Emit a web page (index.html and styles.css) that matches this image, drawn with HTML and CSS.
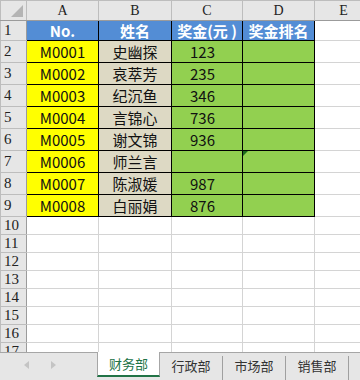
FILE: index.html
```html
<!DOCTYPE html>
<html lang="zh-CN">

<head>
    <meta charset="UTF-8">
    <meta name="viewport" content="width=device-width, initial-scale=1.0">
    <title>财务部</title>
    <link rel="stylesheet" href="styles.css">
</head>

<body>
    <div class="sheet">
        <table class="grid">
            <colgroup>
                <col class="c-rh">
                <col class="c-a">
                <col class="c-b">
                <col class="c-c">
                <col class="c-d">
                <col class="c-e">
            </colgroup>
            <tr class="r-head">
                <th class="corner"><span class="corner-tri"></span></th>
                <th>A</th>
                <th>B</th>
                <th>C</th>
                <th>D</th>
                <th>E</th>
            </tr>
            <tr class="r-title">
                <th class="rh">1</th>
                <td class="d blue">No.</td>
                <td class="d blue">姓名</td>
                <td class="d blue">奖金(元 )</td>
                <td class="d blue">奖金排名</td>
                <td></td>
            </tr>
            <tr class="r-data">
                <th class="rh">2</th>
                <td class="d yellow">M0001</td>
                <td class="d tan">史幽探</td>
                <td class="d green">123</td>
                <td class="d green"></td>
                <td></td>
            </tr>
            <tr class="r-data">
                <th class="rh">3</th>
                <td class="d yellow">M0002</td>
                <td class="d tan">哀萃芳</td>
                <td class="d green">235</td>
                <td class="d green"></td>
                <td></td>
            </tr>
            <tr class="r-data">
                <th class="rh">4</th>
                <td class="d yellow">M0003</td>
                <td class="d tan">纪沉鱼</td>
                <td class="d green">346</td>
                <td class="d green"></td>
                <td></td>
            </tr>
            <tr class="r-data">
                <th class="rh">5</th>
                <td class="d yellow">M0004</td>
                <td class="d tan">言锦心</td>
                <td class="d green">736</td>
                <td class="d green"></td>
                <td></td>
            </tr>
            <tr class="r-data">
                <th class="rh">6</th>
                <td class="d yellow">M0005</td>
                <td class="d tan">谢文锦</td>
                <td class="d green">936</td>
                <td class="d green"></td>
                <td></td>
            </tr>
            <tr class="r-data">
                <th class="rh">7</th>
                <td class="d yellow">M0006</td>
                <td class="d tan">师兰言</td>
                <td class="d green"></td>
                <td class="d green note"><span class="note-tri"></span></td>
                <td></td>
            </tr>
            <tr class="r-data">
                <th class="rh">8</th>
                <td class="d yellow">M0007</td>
                <td class="d tan">陈淑媛</td>
                <td class="d green">987</td>
                <td class="d green"></td>
                <td></td>
            </tr>
            <tr class="r-data">
                <th class="rh">9</th>
                <td class="d yellow">M0008</td>
                <td class="d tan">白丽娟</td>
                <td class="d green">876</td>
                <td class="d green"></td>
                <td></td>
            </tr>
            <tr class="r-empty"><th class="rh">10</th><td></td><td></td><td></td><td></td><td></td></tr>
            <tr class="r-empty"><th class="rh">11</th><td></td><td></td><td></td><td></td><td></td></tr>
            <tr class="r-empty"><th class="rh">12</th><td></td><td></td><td></td><td></td><td></td></tr>
            <tr class="r-empty"><th class="rh">13</th><td></td><td></td><td></td><td></td><td></td></tr>
            <tr class="r-empty"><th class="rh">14</th><td></td><td></td><td></td><td></td><td></td></tr>
            <tr class="r-empty"><th class="rh">15</th><td></td><td></td><td></td><td></td><td></td></tr>
            <tr class="r-empty"><th class="rh">16</th><td></td><td></td><td></td><td></td><td></td></tr>
            <tr class="r-empty"><th class="rh">17</th><td></td><td></td><td></td><td></td><td></td></tr>
        </table>
    </div>

    <div class="tabbar">
        <div class="nav">
            <span class="arrow arrow-left"></span>
            <span class="arrow arrow-right"></span>
        </div>
        <div class="tab active">财务部</div>
        <div class="tab">行政部</div>
        <div class="tab">市场部</div>
        <div class="tab">销售部</div>
    </div>
</body>

</html>
```

FILE: styles.css
```css
* {
    box-sizing: border-box;
}

body {
    margin: 0;
    width: 360px;
    height: 380px;
    display: flex;
    flex-direction: column;
    overflow: hidden;
    background: #fff;
    font-family: "Noto Sans CJK SC", "Noto Sans", sans-serif;
}

.sheet {
    height: 352px;
    overflow: hidden;
}

.grid {
    border-collapse: collapse;
    table-layout: fixed;
    width: 372px;
}

.c-rh { width: 26px; }
.c-a { width: 72px; }
.c-b { width: 73px; }
.c-c { width: 71px; }
.c-d { width: 72px; }
.c-e { width: 58px; }

.grid th,
.grid td {
    border: 1px solid #d4d4d4;
    padding: 0;
    overflow: hidden;
    white-space: nowrap;
}

/* column / row headers */
.grid th {
    background: #e6e6e6;
    font-family: "Liberation Serif", "DejaVu Serif", serif;
    font-weight: normal;
    font-size: 14px;
    color: #222;
    text-align: center;
    border-color: #bdbdbd;
}

.r-head th {
    height: 20px;
    border-bottom-color: #9b9b9b;
    line-height: 18px;
}

.grid .rh {
    text-align: left;
    padding-left: 3px;
    font-size: 15px;
    border-right-color: #9b9b9b;
}

.corner {
    position: relative;
}

.corner-tri {
    position: absolute;
    right: 3px;
    bottom: 3px;
    width: 0;
    height: 0;
    border-left: 12px solid transparent;
    border-bottom: 12px solid #b4b4b4;
}

.r-title th,
.r-title td {
    height: 20px;
}

.r-data th,
.r-data td {
    height: 22px;
}

.r-empty th,
.r-empty td {
    height: 18px;
}

/* filled cells */
.grid .d {
    border: 1px solid #000;
    text-align: center;
    font-size: 15px;
    color: #111;
    line-height: 18px;
}

.grid .blue {
    background: #538dd5;
    color: #fff;
    font-weight: bold;
}

.yellow {
    background: #ffff00;
}

.tan {
    background: #ddd9c4;
}

.green {
    background: #92d050;
}

.grid .green {
    text-align: left;
    padding-left: 18px;
}

.grid .blue.green,
.grid td.blue {
    text-align: center;
    padding-left: 0;
}

.note {
    position: relative;
}

.note-tri {
    position: absolute;
    left: 0;
    top: 0;
    width: 0;
    height: 0;
    border-top: 5px solid #1d6b1d;
    border-right: 5px solid transparent;
}

/* sheet tabs */
.tabbar {
    flex: 1;
    display: flex;
    align-items: flex-start;
    background: #e6e6e6;
    border-top: 1px solid #a6a6a6;
    font-size: 13px;
    color: #333;
}

.nav {
    width: 97px;
    height: 24px;
    display: flex;
    align-items: center;
    gap: 22px;
    padding-left: 24px;
}

.arrow {
    width: 0;
    height: 0;
    border-top: 4px solid transparent;
    border-bottom: 4px solid transparent;
}

.arrow-left {
    border-right: 5px solid #c4c4c4;
}

.arrow-right {
    border-left: 5px solid #c4c4c4;
}

.tab {
    height: 24px;
    margin-top: 3px;
    padding-top: 0;
    width: 63px;
    text-align: center;
    line-height: 19px;
    border-right: 1px solid #a0a0a0;
}

.tab.active {
    margin-top: -1px;
    height: 25px;
    line-height: 23px;
    background: #fff;
    color: #217346;
    border-left: 1px solid #a6a6a6;
    border-right: 1px solid #a6a6a6;
    border-bottom: 2px solid #217346;
}
```
